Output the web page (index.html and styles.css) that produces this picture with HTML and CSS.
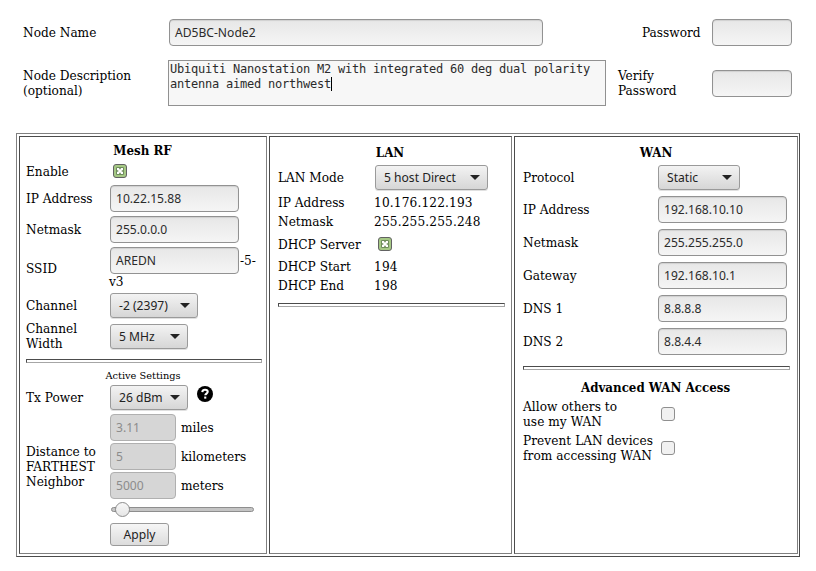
FILE: index.html
```html
<!DOCTYPE html>
<html lang="en">
<head>
<meta charset="utf-8">
<title>Node Setup</title>
<link rel="stylesheet" href="styles.css">
</head>
<body>
<header class="node">
  <span class="label">Node Name</span>
  <div class="field name">AD5BC-Node2</div>
  <span class="label pass">Password</span>
  <div class="field secret"></div>
  <span class="label">Node Description<br>(optional)</span>
  <div class="area">Ubiquiti Nanostation M2 with integrated 60 deg dual polarity<br>antenna aimed northwest<i class="caret"></i></div>
  <span class="label verify">Verify<br>Password</span>
  <div class="field secret"></div>
</header>
<main class="frame">
  <section class="panel mesh">
    <h2 class="title">Mesh RF</h2>
    <div class="row enable"><span>Enable</span><span class="check on"><svg viewBox="0 0 14 14"><use href="#tick"/></svg></span></div>
    <div class="row input"><span>IP Address</span><div class="field">10.22.15.88</div></div>
    <div class="row input"><span>Netmask</span><div class="field">255.0.0.0</div></div>
    <div class="row ssid"><span>SSID</span><div><div class="inline"><div class="field">AREDN</div><span>-5-</span></div><span class="suffix">v3</span></div></div>
    <div class="row channel"><span>Channel</span><div class="select">-2 (2397)</div></div>
    <div class="row width"><span>Channel<br>Width</span><div class="select narrow">5 MHz</div></div>
    <hr class="rule">
    <p class="active">Active Settings</p>
    <div class="row power"><span>Tx Power</span><div class="inline"><div class="select narrow">26 dBm</div>
      <svg class="help" viewBox="0 0 16 16"><circle cx="8" cy="8" r="8"/><path d="M5.300 6.100C5.500 4.400 6.500 3.700 8 3.700c1.700 0 2.700.9 2.700 2.100 0 1.700-2.400 1.800-2.400 3.500"/><path d="M7.200 11.600h2.100"/></svg></div></div>
    <div class="row distance"><span>Distance to<br>FARTHEST<br>Neighbor</span>
      <div class="units">
        <div class="inline"><div class="field off">3.11</div><span>miles</span></div>
        <div class="inline"><div class="field off">5</div><span>kilometers</span></div>
        <div class="inline"><div class="field off">5000</div><span>meters</span></div>
        <div class="slider"><i class="knob"></i></div>
      </div></div>
    <button class="apply">Apply</button>
  </section>
  <section class="panel lan">
    <h2 class="title">LAN</h2>
    <div class="row mode"><span>LAN Mode</span><div class="select">5 host Direct</div></div>
    <div class="row text first"><span>IP Address</span><span class="num">10.176.122.193</span></div>
    <div class="row text"><span>Netmask</span><span class="num">255.255.255.248</span></div>
    <div class="row server"><span>DHCP Server</span><span class="check on"><svg viewBox="0 0 14 14"><use href="#tick"/></svg></span></div>
    <div class="row text"><span>DHCP Start</span><span class="num">194</span></div>
    <div class="row text"><span>DHCP End</span><span class="num">198</span></div>
    <hr class="rule">
  </section>
  <section class="panel wan">
    <h2 class="title">WAN</h2>
    <div class="row mode"><span>Protocol</span><div class="select">Static</div></div>
    <div class="row input first"><span>IP Address</span><div class="field">192.168.10.10</div></div>
    <div class="row input"><span>Netmask</span><div class="field">255.255.255.0</div></div>
    <div class="row input"><span>Gateway</span><div class="field">192.168.10.1</div></div>
    <div class="row input"><span>DNS 1</span><div class="field">8.8.8.8</div></div>
    <div class="row input"><span>DNS 2</span><div class="field">8.8.4.4</div></div>
    <hr class="rule">
    <h2 class="title advanced">Advanced WAN Access</h2>
    <div class="row option"><span>Allow others to<br>use my WAN</span><span class="check"></span></div>
    <div class="row option"><span>Prevent LAN devices<br>from accessing WAN</span><span class="check"></span></div>
  </section>
</main>
<svg class="defs"><symbol id="tick" viewBox="0 0 14 14"><path d="M3.500 3.500h7v7h-7z" fill="#fff" stroke="#6f8d5c"/><path d="M7 4v1.300M7 10V8.700M4 7h1.300M10 7H8.700" stroke="#6f8d5c" stroke-width="1.600"/></symbol></svg>
</body>
</html>
```
FILE: styles.css
```css
* { box-sizing: border-box; }
body {
  margin: 0;
  width: 816px;
  height: 571px;
  overflow: hidden;
  background: #fff;
  color: #000;
  font: 13.5px/15px "DejaVu Serif Condensed", "DejaVu Serif", serif;
}
.defs { display: none; }
.node {
  display: grid;
  grid-template-columns: 146px 449px 94px 80px;
  grid-template-rows: 27px 46px;
  row-gap: 14px;
  align-items: center;
  padding: 19px 0 0 23px;
}
.pass { padding-left: 24px; }
.field {
  width: 129px;
  height: 27px;
  padding: 0 5px;
  border: 1px solid #929292;
  border-radius: 4px;
  background: linear-gradient(#e7e7e7, #f5f5f5);
  box-shadow: inset 0 1px 1px #d0d0d0;
  color: #2b2b2b;
  font: 12.1px/25px "Noto Sans", sans-serif;
  white-space: nowrap;
}
.field.name { width: 374px; }
.field.secret { width: 80px; }
.field.off { width: 66px; border-color: #b0b0b0; background: #d6d6d6; box-shadow: none; color: #8c8c8c; }
.area {
  width: 438px;
  height: 46px;
  margin-left: -1px;
  padding: 1px;
  border: 1px solid #919191;
  background: #f7f7f7;
  color: #2b2b2b;
  font: 12px/15px "DejaVu Sans Mono", monospace;
  letter-spacing: -0.225px;
  white-space: nowrap;
}
.caret { display: inline-block; width: 1px; height: 14px; background: #000; vertical-align: -3px; }
.frame {
  display: grid;
  grid-template-columns: 248px 243px 284px;
  gap: 2px;
  width: 784px;
  height: 424px;
  margin: 27px 0 0 16px;
  padding: 2px;
  border: 1px solid;
  border-color: #808080 #4c4c4c #4c4c4c #808080;
}
.panel { border: 1px solid; border-color: #4c4c4c #808080 #808080 #4c4c4c; }
.mesh { padding-left: 6px; }
.lan, .wan { padding: 2px 0 0 8px; }
.title { height: 26px; margin: 0; font-size: 13.2px; font-weight: bold; line-height: 28px; text-align: center; }
.mesh .title { padding-right: 7px; }
.lan .title { padding-right: 9px; }
.wan .title { padding-right: 8px; }
.row { display: grid; grid-template-columns: 84px 1fr; align-items: center; white-space: nowrap; }
.lan .row { grid-template-columns: 97px 1fr; }
.wan .row { grid-template-columns: 135px 1fr; }
.inline { display: flex; align-items: center; }
.check { display: block; width: 14px; height: 14px; margin-left: 3px; border: 1px solid #8f8f8f; border-radius: 3px; background: #f1f1f1; }
.check.on { border-color: #626262; background: #a6c985; }
.check svg { display: block; width: 14px; height: 14px; margin: -1px; }
.enable { height: 16px; margin-bottom: 4px; }
.mesh .input { height: 31px; }
.ssid { height: 46px; }
.ssid .inline span { padding-left: 1px; }
.suffix { display: block; margin-left: -1px; }
.channel { height: 25px; margin-top: 2px; }
.width { grid-template-rows: 25px; height: 25px; margin-top: 6px; }
.width span { margin: -3px 0 -2px; }
.select {
  display: flex;
  align-items: center;
  justify-content: space-between;
  width: 88px;
  height: 25px;
  padding: 0 7px 0 8px;
  border: 1px solid #9a9a9a;
  border-radius: 3px;
  background: linear-gradient(#f3f3f3, #d6d6d6);
  box-shadow: 0 1px 0 #e0e0e0;
  color: #222;
  font: 12.1px/23px "Noto Sans", sans-serif;
}
.select::after { content: ""; border: 5px solid transparent; border-top: 5px solid #222; border-bottom: 0; }
.select.narrow { width: 78px; }
.rule { height: 4px; margin: 10px 4px 0 0; border: 1px solid; border-color: #4c4c4c #a6a6a6 #a6a6a6 #4c4c4c; }
.active { margin: 6px 0 3px; padding-right: 6px; font: 9.8px/13px "DejaVu Serif", serif; text-align: center; }
.power { height: 25px; }
.help { width: 16px; height: 16px; margin: -7px 0 0 9px; }
.help path { fill: none; stroke: #fff; stroke-width: 2.1; }
.distance { height: 109px; margin-top: 2px; }
.units { display: grid; grid-template-rows: 27px 27px 27px 18px; row-gap: 2px; height: 105px; }
.units span { padding-left: 5px; }
.slider { align-self: start; width: 143px; height: 5px; margin: 6px 0 0 1px; border: 1px solid #8e8e8e; border-radius: 3px; background: #c4c4c4; }
.knob { display: block; width: 15px; height: 15px; margin: -6px 0 0 3px; border: 1px solid #8c8c8c; border-radius: 50%; background: linear-gradient(#f7f7f7, #e6e6e6); }
.apply {
  display: block;
  width: 59px;
  height: 23px;
  margin: 2px 0 0 84px;
  padding: 0;
  border: 1px solid #9a9a9a;
  border-radius: 3px;
  background: linear-gradient(#f6f6f6, #dcdcdc);
  color: #222;
  font: 12.1px/21px "Noto Sans", sans-serif;
}
.mode { height: 25px; }
.lan .select { width: 113px; }
.lan .text { height: 19px; }
.num { margin-left: -1px; letter-spacing: 0.15px; }
.lan .first { margin-top: 3px; }
.server { height: 26px; }
.lan .rule { margin: 8px 6px 0 0; }
.wan .select { width: 82px; }
.wan .input { height: 27px; margin-bottom: 6px; }
.wan .first { margin-top: 6px; }
.wan .rule { margin: 11px 7px 0 0; }
.wan .advanced { margin: 4px 0 -1px; padding-right: 9px; }
.option { height: 30px; letter-spacing: 0.05px; }
.option + .option { margin-top: 4px; }
```
